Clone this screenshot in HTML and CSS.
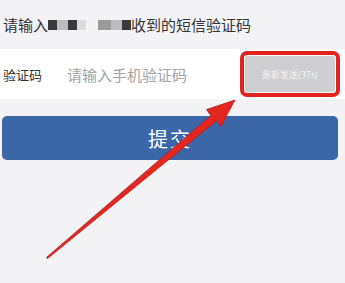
FILE: index.html
```html
<!DOCTYPE html>
<html lang="zh-CN">
<head>
  <meta charset="UTF-8" />
  <title>短信验证</title>
  <link rel="stylesheet" href="styles.css">
</head>
<body>

  <div class="tip">
    请输入<span class="mask m-dark"></span><span class="mask m-light"></span><span class="mask m-dark"></span><span class="mask m-pale"></span><span class="gap"></span><span class="mask m-mid"></span><span class="mask m-light"></span><span class="mask m-dark"></span>收到的短信验证码
  </div>

  <div class="row">
    <span class="label">验证码</span>
    <span class="placeholder">请输入手机验证码</span>
    <button class="send">重新发送(37s)</button>
  </div>

  <button class="submit">提交</button>

  <svg class="arrow" width="345" height="283" viewBox="0 0 345 283">
    <polygon points="235,100 220.7,126.4 216.5,120.6 47.5,258.6 46.5,257.4 210.7,115.4 206.5,109.6" fill="#e3261f" stroke="#b81a16" stroke-width="0.8" stroke-linejoin="round"/>
  </svg>

</body>
</html>
```

FILE: styles.css
```css
body {
  margin: 0;
  width: 345px;
  height: 283px;
  background: #f3f2f5;
  font-family: "Noto Sans CJK SC", sans-serif;
  color: #333;
  position: relative;
  overflow: hidden;
}
.tip {
  height: 49px;
  display: flex;
  align-items: center;
  padding-left: 3px;
  font-size: 15px;
}
.mask {
  display: inline-block;
  height: 10px;
  width: 9px;
}
.m-dark { background: #3a3a3c; }
.m-mid { background: #9a9a9c; width: 13px; }
.m-light { background: #bdbdbf; width: 11px; }
.m-pale { background: #dcdcde; }
.gap { display: inline-block; width: 12px; }
.row {
  height: 50px;
  background: #fff;
  display: flex;
  align-items: center;
}
.label {
  width: 64px;
  padding-left: 3px;
  font-size: 13px;
  color: #333;
}
.placeholder {
  font-size: 15px;
  color: #a3a3a6;
}
.send {
  margin-left: auto;
  margin-right: 10px;
  width: 90px;
  height: 36px;
  border: none;
  border-radius: 2px;
  background: #cfcfd1;
  color: #f4f4f4;
  font-family: "Noto Sans CJK SC", sans-serif;
  font-size: 9px;
  padding: 0;
  outline: 4px solid #e3231e;
  outline-offset: 1px;
}
.submit {
  display: block;
  margin: 17px 7px 0 2px;
  width: 336px;
  height: 44px;
  border: none;
  border-radius: 5px;
  background: #3b66a8;
  color: #fff;
  font-family: "Noto Sans CJK SC", sans-serif;
  font-size: 20px;
  letter-spacing: 2px;
}
.arrow {
  position: absolute;
  left: 0;
  top: 0;
}
```
